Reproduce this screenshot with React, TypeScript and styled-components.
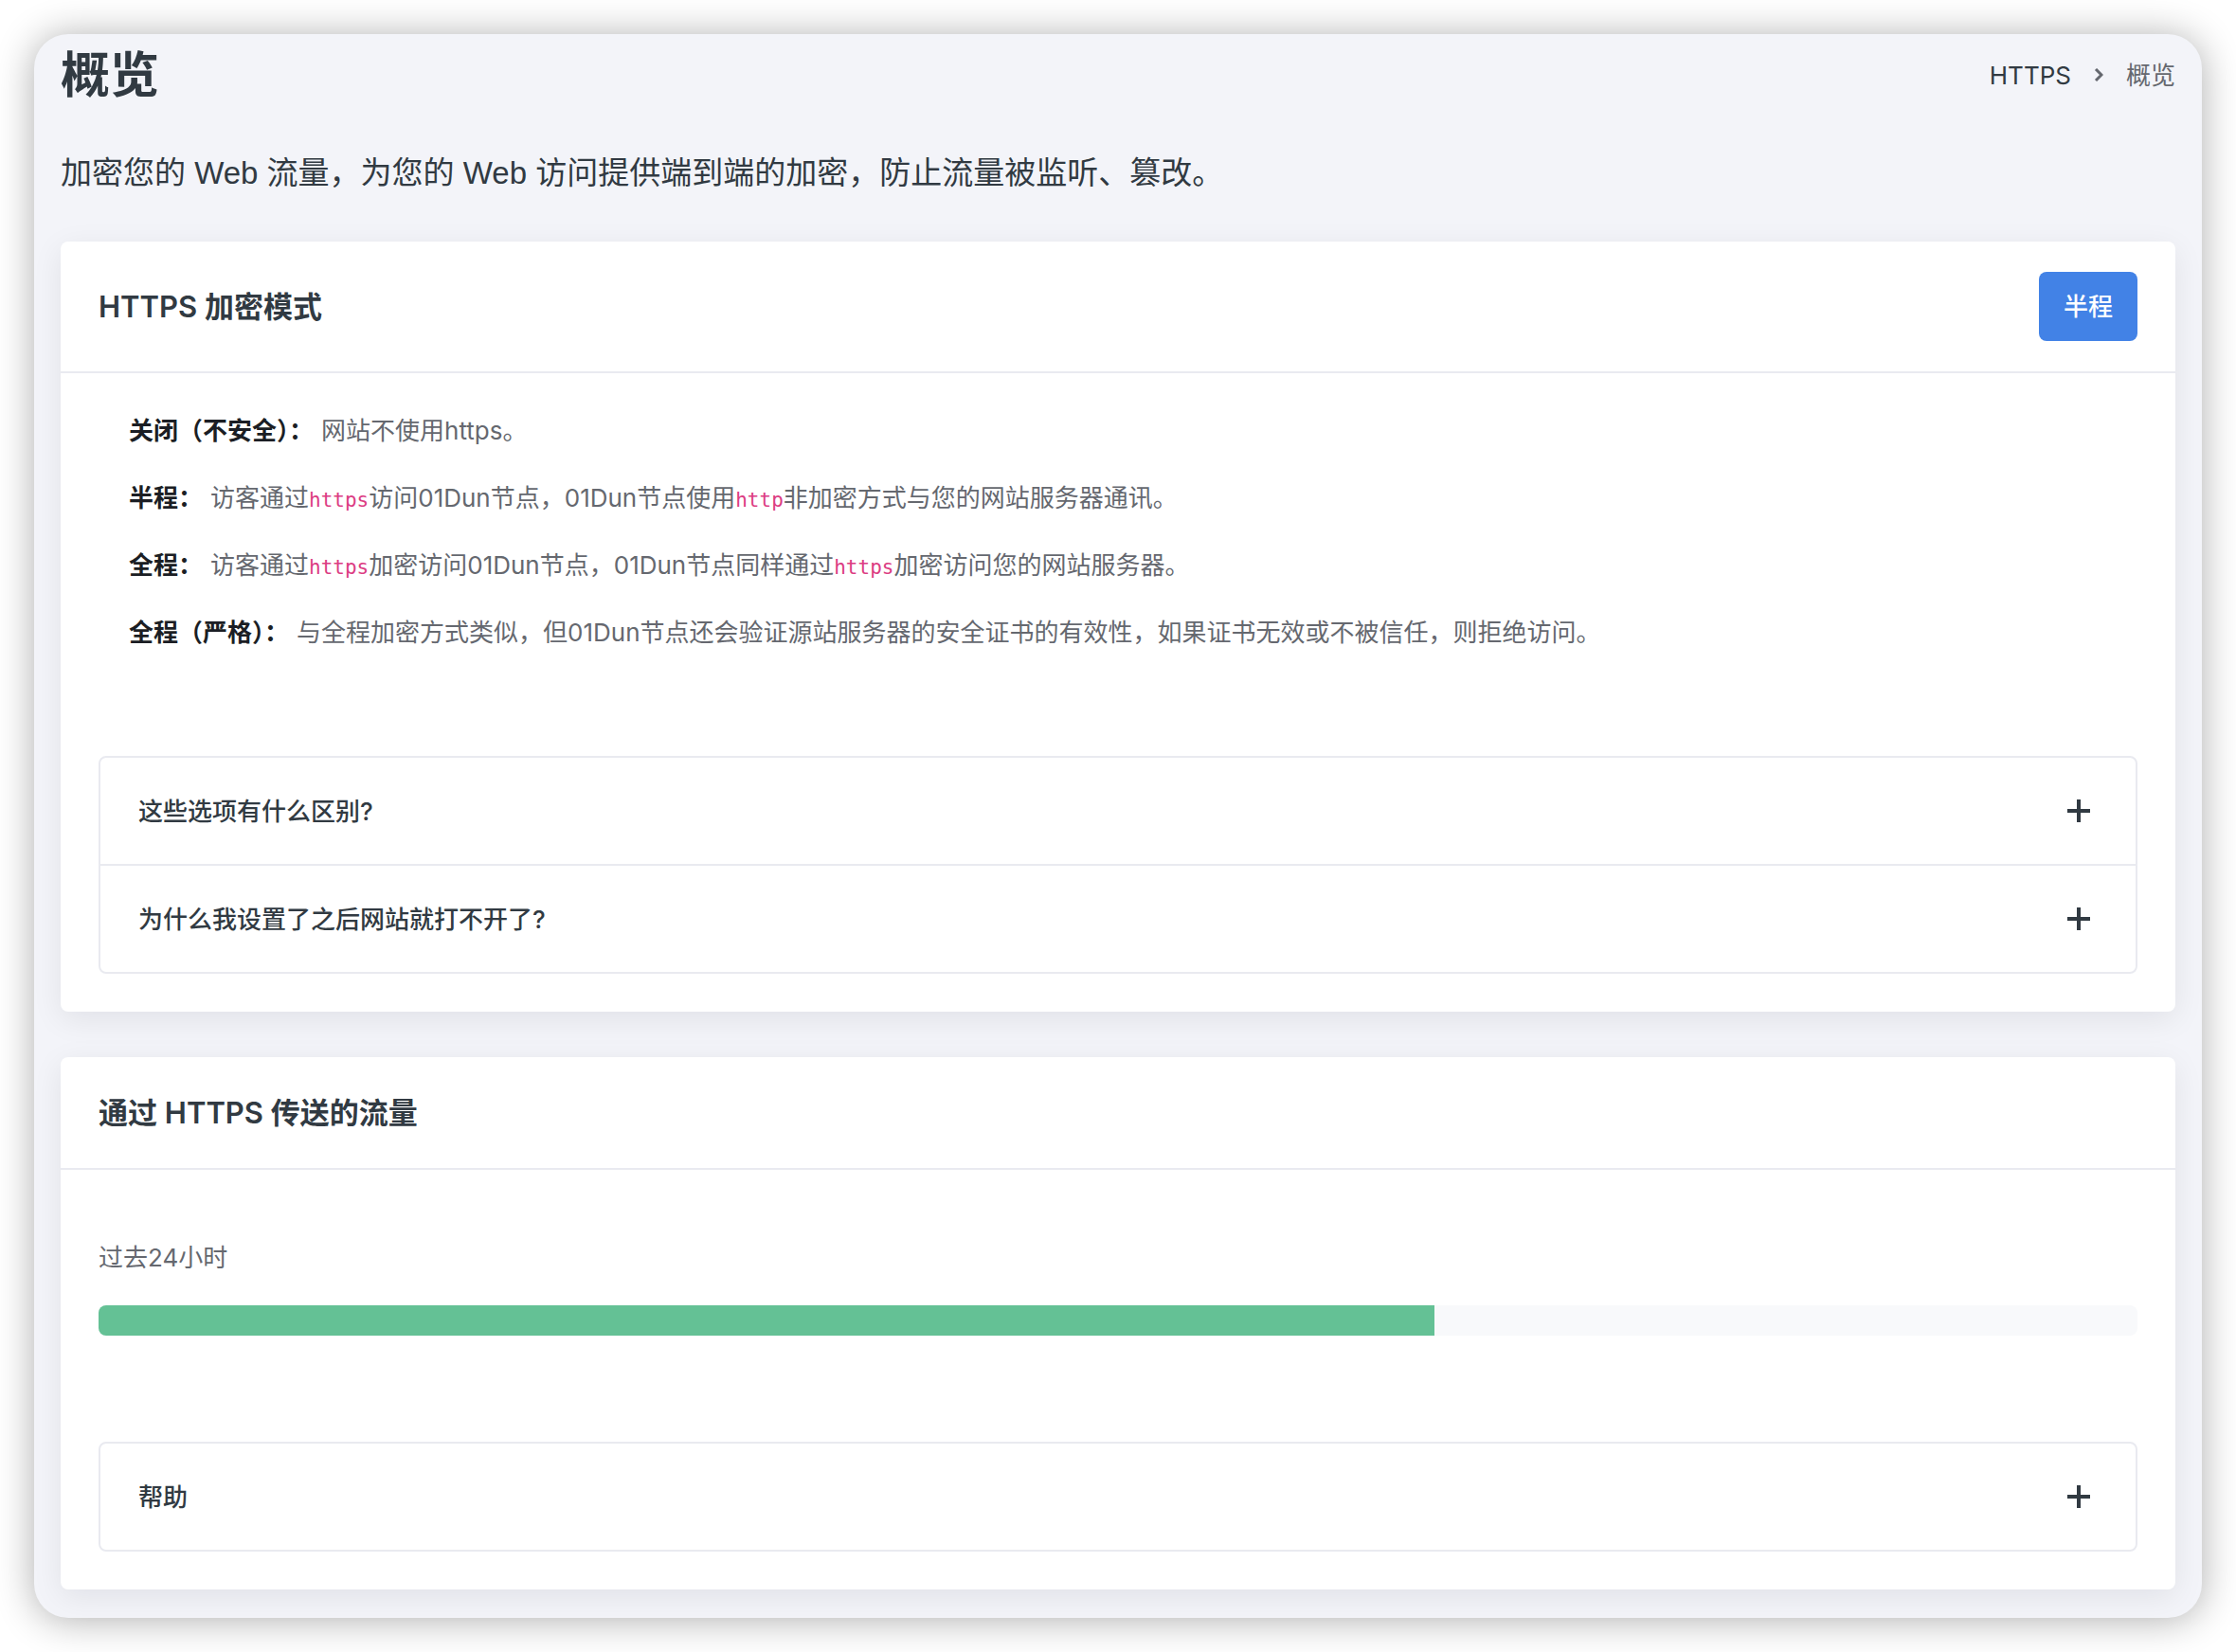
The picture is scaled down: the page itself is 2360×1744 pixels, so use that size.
import React from "react";
import styled, { createGlobalStyle } from "styled-components";

const sans = `Inter, "Noto Sans CJK SC", sans-serif`;
const leadSans = `"Liberation Sans", "Noto Sans CJK SC", sans-serif`;

const GlobalStyle = createGlobalStyle`
  *, *::before, *::after { box-sizing: border-box; }
  body {
    margin: 0;
    background: #fff;
    color: #65686f;
    font: 400 26px/41px ${sans};
  }
  h1, h2, p, ol, dl, dd, dt { margin: 0; padding: 0; }
  button { font: inherit; cursor: pointer; }
`;

const Backdrop = styled.div`
  padding: 36px;
`;

const Page = styled.main`
  padding: 0 28px 30px;
  border-radius: 36px;
  background: #f3f4f9;
  box-shadow: 0 2px 40px rgba(0, 0, 0, 0.32);
`;

const PageHeader = styled.header`
  display: flex;
  align-items: center;
  justify-content: space-between;
  height: 86px;
`;

const PageTitle = styled.h1`
  padding-top: 2px;
  color: #313a42;
  font-size: 52px;
  font-weight: 700;
  line-height: 64px;
`;

const Crumbs = styled.ol`
  display: flex;
  align-items: center;
  gap: 24px;
  list-style: none;
`;

const Crumb = styled.li`
  display: flex;
  align-items: center;
  gap: 24px;
`;

const CrumbLink = styled.a`
  color: #313a42;
  text-decoration: none;
`;

const Intro = styled.p`
  padding: 37px 0 48px;
  color: #313a42;
  font-family: ${leadSans};
  font-size: 33px;
  line-height: 48px;
`;

const Cards = styled.div`
  display: grid;
  gap: 48px;
`;

const Card = styled.section`
  border-radius: 8px;
  background: #fff;
  box-shadow: 0 8px 32px rgba(8, 10, 30, 0.08);
`;

const CardHeader = styled.header`
  display: flex;
  align-items: center;
  justify-content: space-between;
  padding: 32px 40px;
  border-bottom: 2px solid #e9eaf0;
`;

const CardTitle = styled.h2`
  padding: 3px 0;
  color: #313a42;
  font-size: 31px;
  font-weight: 600;
  line-height: 47px;
`;

const ModeButton = styled.button`
  height: 73px;
  padding: 0 26px;
  border: 0;
  border-radius: 8px;
  background: #4282e6;
  color: #fff;
  font-weight: 500;
`;

const CardBody = styled.div`
  padding: 40px;
`;

const Modes = styled.dl`
  display: grid;
  gap: 30px;
  padding: 0 32px 110px;
`;

const Mode = styled.div`
  display: flex;
  gap: 8px;
`;

const ModeName = styled.dt`
  flex: none;
  color: #1b1e24;
  font-weight: 700;
`;

const Code = styled.code`
  color: #dc3d83;
  font-family: "DejaVu Sans Mono", monospace;
  font-size: 21px;
  line-height: 24px;
`;

const Accordion = styled.div`
  border: 2px solid #e9eaf0;
  border-radius: 8px;
`;

const AccordionItem = styled.div`
  & + & { border-top: 2px solid #e9eaf0; }
`;

const AccordionButton = styled.button`
  display: flex;
  align-items: center;
  justify-content: space-between;
  width: 100%;
  height: 112px;
  padding: 0 48px 0 40px;
  border: 0;
  background: none;
  color: #313a42;
  font-weight: 500;
  text-align: left;
`;

const Usage = styled.div`
  display: grid;
  gap: 30px;
  padding: 32px 0 112px;
`;

const Track = styled.div`
  overflow: hidden;
  height: 32px;
  border-radius: 8px;
  background: #f8f9fb;
`;

const Fill = styled.div`
  height: 100%;
  background: #64c195;
`;

function Plus() {
  return (
    <svg width="24" height="24" viewBox="0 0 24 24" fill="none" stroke="currentColor" strokeWidth="4" aria-hidden="true">
      <path d="M12 0v24M0 12h24" />
    </svg>
  );
}

function Chevron() {
  return (
    <svg width="10" height="14" viewBox="0 0 10 14" fill="none" stroke="currentColor" strokeWidth="3" aria-hidden="true">
      <path d="M2 1l6 6-6 6" />
    </svg>
  );
}

function Questions({ items }: { items: string[] }) {
  return (
    <Accordion>
      {items.map((title) => (
        <AccordionItem key={title}>
          <AccordionButton type="button" aria-expanded={false}>
            {title}
            <Plus />
          </AccordionButton>
        </AccordionItem>
      ))}
    </Accordion>
  );
}

const modes: { name: string; text: React.ReactNode }[] = [
  { name: "关闭（不安全）：", text: "网站不使用https。" },
  {
    name: "半程：",
    text: <>访客通过<Code>https</Code>访问01Dun节点，01Dun节点使用<Code>http</Code>非加密方式与您的网站服务器通讯。</>,
  },
  {
    name: "全程：",
    text: <>访客通过<Code>https</Code>加密访问01Dun节点，01Dun节点同样通过<Code>https</Code>加密访问您的网站服务器。</>,
  },
  {
    name: "全程（严格）：",
    text: "与全程加密方式类似，但01Dun节点还会验证源站服务器的安全证书的有效性，如果证书无效或不被信任，则拒绝访问。",
  },
];

export default function App() {
  const share = 65.5;
  return (
    <Backdrop lang="zh-CN">
      <GlobalStyle />
      <Page>
        <PageHeader>
          <PageTitle>概览</PageTitle>
          <nav>
            <Crumbs>
              <Crumb>
                <CrumbLink href="#https">HTTPS</CrumbLink>
                <Chevron />
              </Crumb>
              <Crumb aria-current="page">概览</Crumb>
            </Crumbs>
          </nav>
        </PageHeader>
        <Intro>加密您的 Web 流量，为您的 Web 访问提供端到端的加密，防止流量被监听、篡改。</Intro>
        <Cards>
          <Card>
            <CardHeader>
              <CardTitle>HTTPS 加密模式</CardTitle>
              <ModeButton type="button">半程</ModeButton>
            </CardHeader>
            <CardBody>
              <Modes>
                {modes.map((mode) => (
                  <Mode key={mode.name}>
                    <ModeName>{mode.name}</ModeName>
                    <dd>{mode.text}</dd>
                  </Mode>
                ))}
              </Modes>
              <Questions items={["这些选项有什么区别?", "为什么我设置了之后网站就打不开了?"]} />
            </CardBody>
          </Card>
          <Card>
            <CardHeader>
              <CardTitle>通过 HTTPS 传送的流量</CardTitle>
            </CardHeader>
            <CardBody>
              <Usage>
                <p id="usage">过去24小时</p>
                <Track role="progressbar" aria-labelledby="usage" aria-valuenow={share} aria-valuemin={0} aria-valuemax={100}>
                  <Fill style={{ width: `${share}%` }} />
                </Track>
              </Usage>
              <Questions items={["帮助"]} />
            </CardBody>
          </Card>
        </Cards>
      </Page>
    </Backdrop>
  );
}
